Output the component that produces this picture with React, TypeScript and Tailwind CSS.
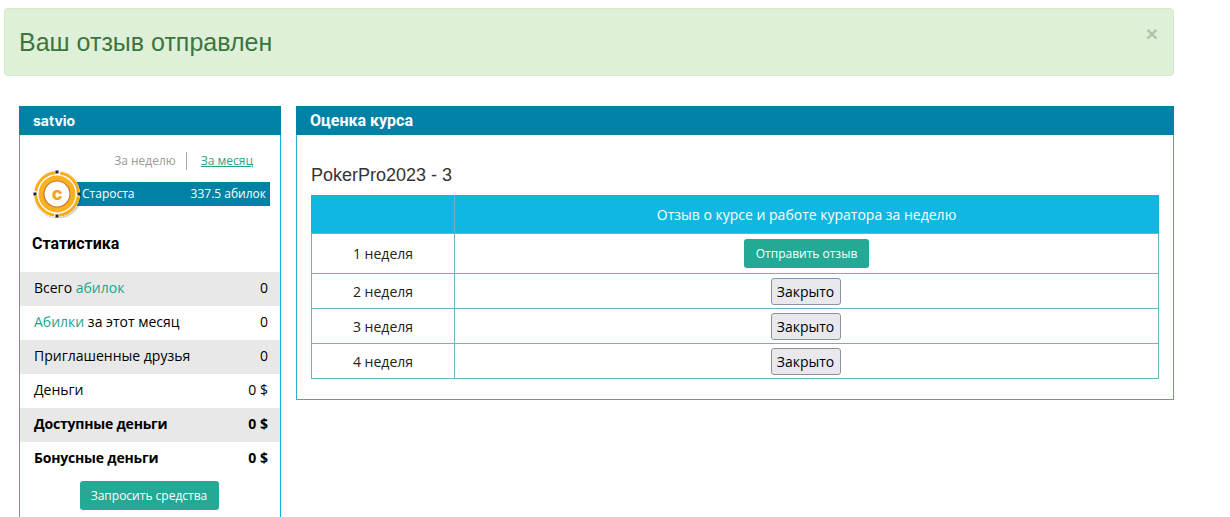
import React from "react";

const Chip = () => (
  <svg width="48" height="48" viewBox="0 0 48 48" className="absolute left-[-1px] top-[-12px]">
    <defs>
      <filter id="s" x="-20%" y="-20%" width="140%" height="140%">
        <feDropShadow dx="1" dy="1" stdDeviation="1" floodColor="#000" floodOpacity="0.3" />
      </filter>
    </defs>
    <circle cx="24" cy="24" r="23" fill="#fff" filter="url(#s)" />
    <circle cx="24" cy="24" r="21.3" fill="none" stroke="#fbac18" strokeWidth="3" strokeDasharray="28.5 5" strokeDashoffset="-2.5" />
    <circle cx="24" cy="24" r="18.5" fill="#fdb022" />
    <circle cx="24" cy="24" r="13" fill="#fff" stroke="#c8762a" strokeWidth="1.2" />
    <rect x="22.5" y="0.5" width="3" height="3" fill="#222" />
    <rect x="22.5" y="44.5" width="3" height="3" fill="#222" />
    <rect x="0.5" y="22.5" width="3" height="3" fill="#222" />
    <rect x="44.5" y="22.5" width="3" height="3" fill="#222" />
    <text x="24" y="30" textAnchor="middle" fontSize="18" fontWeight="800" fill="#f7a116" fontFamily="Inter, sans-serif">c</text>
  </svg>
);

const Row = ({ label, value, shaded, bold }: { label: React.ReactNode; value: string; shaded?: boolean; bold?: boolean }) => (
  <div className={`flex h-[34px] items-center justify-between pb-[3px] pl-[14px] pr-[12px] text-[14px] text-black ${shaded ? "bg-[#e8e8e8]" : ""} ${bold ? "font-bold" : ""}`}>
    <span className={bold ? "tracking-[-0.2px]" : ""}>{label}</span>
    <span>{value}</span>
  </div>
);

const Closed = () => (
  <button className="mr-[2px] h-[27px] w-[70px] rounded-[3px] border border-[#8f8f9d] bg-[#e9e9ed] text-[14px] text-black">Закрыто</button>
);

const WeekRow = ({ week, h, children }: { week: string; h: string; children: React.ReactNode }) => (
  <tr className={h}>
    <td className="border border-[#6fb1c6] p-0 text-center text-[14px] text-[#222]">{week}</td>
    <td className="border border-[#6fb1c6] p-0 text-center">{children}</td>
  </tr>
);

export default function App() {
  return (
    <div className="h-[517px] overflow-hidden bg-white pl-1 pt-2 font-['Open_Sans',sans-serif]">
      <div className="relative flex h-[68px] w-[1170px] items-center rounded border border-[#d6e9c6] bg-[#dff0d8] pl-[14px]">
        <h1 className="pt-[2px] font-['Liberation_Sans',sans-serif] text-[25px] text-[#3c763d]">Ваш отзыв отправлен</h1>
        <span className="absolute right-[15px] top-[14px] font-['Liberation_Sans',sans-serif] text-[21px] font-bold leading-[21px] text-[#b3c1ac]">×</span>
      </div>

      <div className="ml-[15px] mt-[30px] flex items-start gap-[15px]">
        <aside className="h-[420px] w-[262px] shrink-0">
          <div className="flex h-[29px] items-center bg-[#0081a6] pl-[14px] font-['Inter',sans-serif] text-[14px] font-bold text-white">satvio</div>
          <div className="h-[391px] border-x border-[#10b7df]">
            <div className="flex h-[47px] items-start justify-end pr-[27px] pt-[17px] text-[12px] leading-[18px]">
              <span className="text-[#999]">За неделю</span>
              <span className="ml-[10px] mr-[14px] h-[18px] w-px bg-[#aaa]" />
              <span className="text-[#23a48f] underline">За месяц</span>
            </div>
            <div className="relative ml-[14px] h-[24px] w-[236px]">
              <div className="ml-[25px] flex h-[24px] items-center justify-between bg-[#0081a6] pl-[23px] pr-[4px] text-[12px] text-white">
                <span>Староста</span>
                <span>337.5 абилок</span>
              </div>
              <Chip />
            </div>
            <div className="ml-[12px] mt-[27px] h-[39px] font-['Roboto',sans-serif] text-[16px] font-bold leading-[21px] text-black">Статистика</div>
            <Row shaded label={<>Всего <span className="text-[#23a48f]">абилок</span></>} value="0" />
            <Row label={<><span className="text-[#23a48f]">Абилки</span> за этот месяц</>} value="0" />
            <Row shaded label="Приглашенные друзья" value="0" />
            <Row label="Деньги" value="0 $" />
            <Row shaded bold label="Доступные деньги" value="0 $" />
            <Row bold label="Бонусные деньги" value="0 $" />
            <div className="mt-[5px] flex justify-center">
              <button className="mr-[2px] h-[29px] w-[139px] rounded-[3px] bg-[#23a995] text-[12px] text-white">Запросить средства</button>
            </div>
          </div>
        </aside>

        <main className="w-[878px] shrink-0">
          <div className="flex h-[29px] items-center bg-[#0081a6] pl-[14px] pt-[1px] font-['Roboto',sans-serif] text-[16px] font-bold text-white">Оценка курса</div>
          <div className="h-[265px] border-x border-b border-[#31aecd] px-[14px] pt-[29px]">
            <h2 className="h-[31px] font-['Liberation_Sans',sans-serif] text-[18px] leading-[22px] text-[#333]">PokerPro2023 - 3</h2>
            <table className="w-[848px] table-fixed border-collapse">
              <colgroup>
                <col className="w-[143px]" />
                <col />
              </colgroup>
              <thead>
                <tr className="h-[38px] bg-[#10b7e0] text-[14px] font-normal text-white">
                  <th className="border border-[#10b7e0] border-r-[#6fb1c6] border-b-[#6fb1c6] p-0 font-normal"></th>
                  <th className="border border-[#10b7e0] border-l-[#6fb1c6] border-b-[#6fb1c6] p-0 font-normal">Отзыв о курсе и работе куратора за неделю</th>
                </tr>
              </thead>
              <tbody>
                <WeekRow week="1 неделя" h="h-[40px]">
                  <button className="h-[29px] w-[125px] rounded-[3px] bg-[#23a995] align-middle text-[12px] text-white">Отправить отзыв</button>
                </WeekRow>
                <WeekRow week="2 неделя" h="h-[35px]"><Closed /></WeekRow>
                <WeekRow week="3 неделя" h="h-[35px]"><Closed /></WeekRow>
                <WeekRow week="4 неделя" h="h-[35px]"><Closed /></WeekRow>
              </tbody>
            </table>
          </div>
        </main>
      </div>
    </div>
  );
}
